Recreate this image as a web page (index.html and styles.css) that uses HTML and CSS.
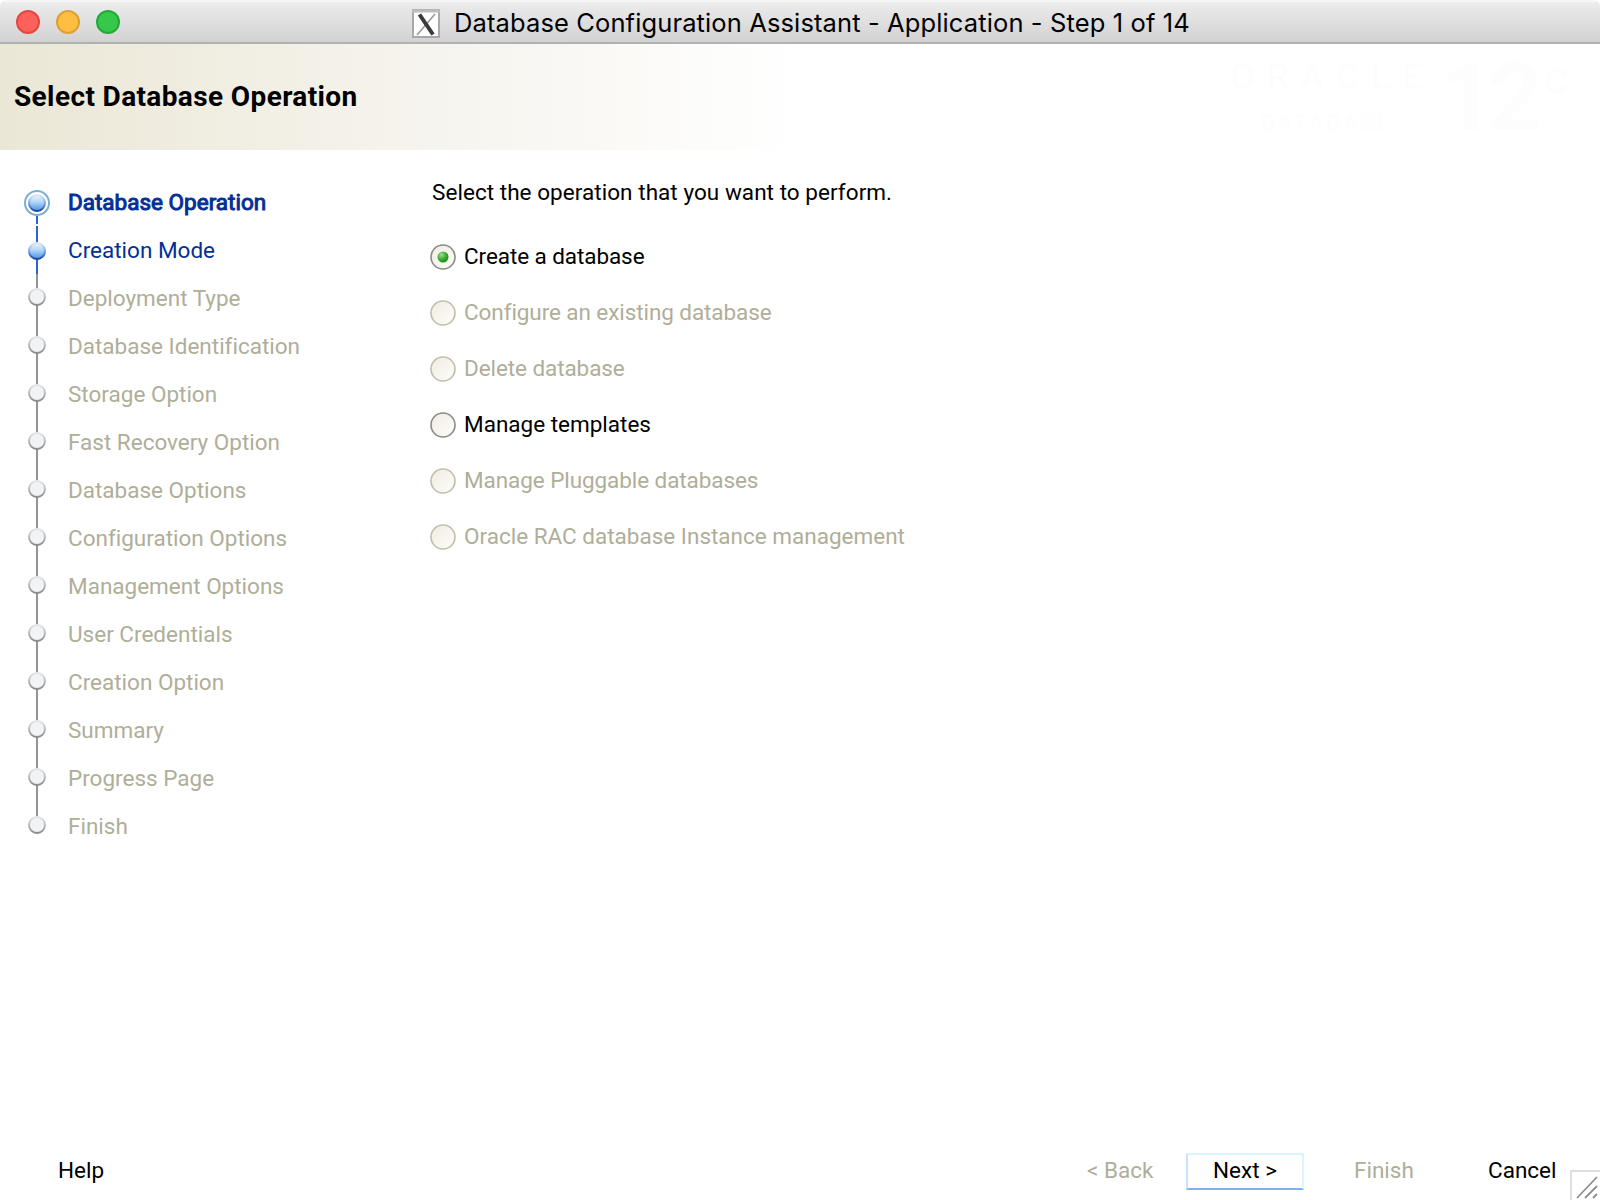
FILE: index.html
```html
<!DOCTYPE html>
<html lang="en">
<head>
<meta charset="utf-8">
<title>Database Configuration Assistant</title>
<link rel="stylesheet" href="styles.css">
</head>
<body>
<svg class="defs" width="0" height="0">
  <defs>
    <linearGradient id="blue" x1="0" y1="0" x2="0" y2="1"><stop offset="0" stop-color="#edf5fd"/><stop offset=".45" stop-color="#b3d5f5"/><stop offset="1" stop-color="#4393ea"/></linearGradient>
    <linearGradient id="blue-edge" x1="0" y1="0" x2="0" y2="1"><stop offset="0" stop-color="#dceafa"/><stop offset=".5" stop-color="#79a8ec"/><stop offset="1" stop-color="#1c3f9f"/></linearGradient>
    <linearGradient id="gray-edge" x1="0" y1="0" x2="0" y2="1"><stop offset="0" stop-color="#e6e6e6"/><stop offset=".5" stop-color="#bdbdbf"/><stop offset="1" stop-color="#8b8b8f"/></linearGradient>
    <linearGradient id="cream" x1="0" y1="0" x2="1" y2="1"><stop offset="0" stop-color="#efece0"/><stop offset="1" stop-color="#fdfdfb"/></linearGradient>
    <radialGradient id="green" cx=".35" cy=".3" r=".75"><stop offset="0" stop-color="#a5dc9d"/><stop offset=".5" stop-color="#46b13d"/><stop offset="1" stop-color="#138c12"/></radialGradient>
    <symbol id="dot-blue" viewBox="0 0 18 18"><circle cx="9" cy="9" r="8" fill="url(#blue)" stroke="url(#blue-edge)" stroke-width="2"/></symbol>
    <symbol id="dot-gray" viewBox="0 0 18 18"><circle cx="9" cy="9" r="8" fill="#f1f3f5" stroke="url(#gray-edge)" stroke-width="2"/></symbol>
    <symbol id="pending" viewBox="0 0 26 48"><path d="M13 0V48" stroke="#939398" stroke-width="2"/><use href="#dot-gray" x="4" y="13" width="18" height="18"/></symbol>
    <symbol id="radio" viewBox="0 0 26 26"><circle cx="13" cy="13" r="12" fill="url(#cream)" stroke="currentColor" stroke-width="1.600"/></symbol>
  </defs>
</svg>
<div class="window">
  <header class="titlebar">
    <div class="lights"><span class="light close"></span><span class="light minimize"></span><span class="light zoom"></span></div>
    <svg class="x-icon" width="28" height="29" viewBox="0 0 28 29"><rect x="1" y="1" width="26" height="27" fill="#fff" stroke="#a9a9a9" stroke-width="2"/><path d="M0 2h28" stroke="#bdbdbd" stroke-width="3"/><path d="M23 5L5 26" stroke="#999" stroke-width="1.600"/><path d="M7.500 5.500L21 25.500" stroke="#3b3b3b" stroke-width="4"/></svg>
    <span class="title">Database Configuration Assistant - Application - Step 1 of 14</span>
  </header>
  <section class="banner">
    <h1>Select Database Operation</h1>
    <div class="brand"><div class="brand-name"><span class="oracle">ORACLE</span><span class="product">DATABASE</span></div><span class="version">12</span><span class="release">c</span></div>
  </section>
  <div class="body">
    <nav class="steps">
      <div class="step current"><svg width="26" height="48"><path d="M13 37V45M13 47V48" stroke="#2f62d2" stroke-width="2"/><circle cx="13" cy="24" r="12" fill="#fff" stroke="#78b1cc" stroke-width="2"/><use href="#dot-blue" x="4" y="15" width="18" height="18"/></svg><span>Database Operation</span></div>
      <div class="step next"><svg width="26" height="48"><path d="M13 0V47" stroke="#2f62d2" stroke-width="2"/><path d="M13 47V48" stroke="#939398" stroke-width="2"/><use href="#dot-blue" x="4" y="15" width="18" height="18"/></svg><span>Creation Mode</span></div>
      <div class="step"><svg width="26" height="48"><use href="#pending"/></svg><span>Deployment Type</span></div>
      <div class="step"><svg width="26" height="48"><use href="#pending"/></svg><span>Database Identification</span></div>
      <div class="step"><svg width="26" height="48"><use href="#pending"/></svg><span>Storage Option</span></div>
      <div class="step"><svg width="26" height="48"><use href="#pending"/></svg><span>Fast Recovery Option</span></div>
      <div class="step"><svg width="26" height="48"><use href="#pending"/></svg><span>Database Options</span></div>
      <div class="step"><svg width="26" height="48"><use href="#pending"/></svg><span>Configuration Options</span></div>
      <div class="step"><svg width="26" height="48"><use href="#pending"/></svg><span>Management Options</span></div>
      <div class="step"><svg width="26" height="48"><use href="#pending"/></svg><span>User Credentials</span></div>
      <div class="step"><svg width="26" height="48"><use href="#pending"/></svg><span>Creation Option</span></div>
      <div class="step"><svg width="26" height="48"><use href="#pending"/></svg><span>Summary</span></div>
      <div class="step"><svg width="26" height="48"><use href="#pending"/></svg><span>Progress Page</span></div>
      <div class="step"><svg width="26" height="48"><path d="M13 0V16" stroke="#939398" stroke-width="2"/><use href="#dot-gray" x="4" y="13" width="18" height="18"/></svg><span>Finish</span></div>
    </nav>
    <main class="content">
      <p class="prompt">Select the operation that you want to perform.</p>
      <div class="option tight"><svg class="radio" width="26" height="26"><use href="#radio"/><circle cx="13" cy="13" r="5.500" fill="url(#green)"/></svg><span>Create a database</span></div>
      <div class="option tight disabled"><svg class="radio" width="26" height="26"><use href="#radio"/></svg><span>Configure an existing database</span></div>
      <div class="option tight disabled"><svg class="radio" width="26" height="26"><use href="#radio"/></svg><span>Delete database</span></div>
      <div class="option"><svg class="radio" width="26" height="26"><use href="#radio"/></svg><span>Manage templates</span></div>
      <div class="option tight disabled"><svg class="radio" width="26" height="26"><use href="#radio"/></svg><span>Manage Pluggable databases</span></div>
      <div class="option disabled"><svg class="radio" width="26" height="26"><use href="#radio"/></svg><span>Oracle RAC database Instance management</span></div>
    </main>
  </div>
  <footer class="footer">
    <span class="btn help">Help</span>
    <div class="actions">
      <span class="btn disabled">&lt; Back</span>
      <span class="btn primary">Next &gt;</span>
      <span class="btn disabled">Finish</span>
      <span class="btn">Cancel</span>
    </div>
    <svg class="grip" width="30" height="30" viewBox="0 0 30 30"><path d="M0 1H30M1 0V30" stroke="#dedede" stroke-width="2"/><path d="M7 28L27 7M15 28L27 16M23 28L27 24" stroke="#8e8e8e" stroke-width="1.800"/></svg>
  </footer>
</div>
</body>
</html>
```
FILE: styles.css
```css
* { box-sizing: border-box; }
body { margin: 0; background: #fff; font-family: Roboto, "Liberation Sans", sans-serif; font-size: 22.5px; font-variant-ligatures: none; color: #000; }
.defs { display: block; }
.window { width: 1600px; height: 1200px; display: flex; flex-direction: column; overflow: hidden; border-radius: 6px 6px 0 0; }

.titlebar { height: 44px; flex: none; display: flex; align-items: flex-start; background: linear-gradient(#ececec, #d2d2d2); border-top: 2px solid #f6f6f6; border-bottom: 2px solid #b1b1b1; }
.lights { display: flex; gap: 16px; padding: 8px 0 0 16px; width: 412px; }
.light { width: 24px; height: 24px; border-radius: 50%; border: 2px solid; }
.close { background: #fe605b; border-color: #e44641; }
.minimize { background: #febe41; border-color: #dfa033; }
.zoom { background: #35c84b; border-color: #22aa35; }
.x-icon { margin-top: 7px; }
.title { margin: 4px 0 0 14px; line-height: 34px; font-family: Inter, sans-serif; font-size: 25.5px; letter-spacing: .12px; white-space: nowrap; }

.banner { height: 106px; flex: none; display: flex; justify-content: space-between; background: linear-gradient(90deg, #ebe7d6, #f5f3ec 400px, #fff 800px); }
h1 { margin: 36px 0 0 14px; font-size: 28px; line-height: 34px; font-weight: 700; letter-spacing: .38px; }
.brand { display: flex; color: #fdfdfd; padding: 12px 32px 0 0; }
.brand-name { display: flex; flex-direction: column; align-items: center; margin-right: 18px; }
.oracle { font-size: 34px; line-height: 40px; letter-spacing: 13px; margin-right: -13px; }
.product { font-size: 22px; line-height: 28px; letter-spacing: 3px; margin-top: 14px; }
.version { font-size: 94px; line-height: 84px; font-weight: 700; letter-spacing: -6px; margin-right: 8px; }
.release { font-size: 46px; line-height: 42px; }

.body { flex: 1; display: flex; }
.steps { width: 430px; padding-top: 29px; }
.step { height: 48px; display: flex; gap: 18px; padding-left: 24px; line-height: 46px; color: #afae99; }
.step svg { flex: none; }
.current, .next { color: #042f97; }
.current { -webkit-text-stroke: 1px #042f97; }

.content { padding-top: 28px; }
.prompt { margin: 0 0 23px; line-height: 28px; letter-spacing: .05px; padding-left: 2px; }
.option { height: 56px; display: flex; align-items: center; line-height: 26px; }
.option span { margin-top: -2px; }
.tight { letter-spacing: -.08px; }
.radio { margin: -1px 8px 0 0; color: #8b8a84; flex: none; }
.disabled { color: #afae99; }
.disabled .radio { color: #c0beab; }

.footer { height: 70px; flex: none; display: flex; justify-content: space-between; }
.btn { height: 37px; line-height: 34px; white-space: nowrap; }
.help { margin: 23px 0 0 58px; }
.actions { display: grid; grid-template-columns: 99px 118px 50px 134px 82px; margin: 23px 0 0 auto; }
.actions .btn:nth-child(3) { grid-column: 4; }
.primary { text-align: center; border: 2px solid #d9f5ff; border-left-color: #c5e3fe; border-bottom-color: #82aef3; line-height: 30px; }
.grip { align-self: flex-end; flex: none; }
```
